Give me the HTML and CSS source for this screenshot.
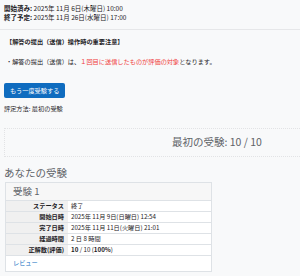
FILE: index.html
```html
<!DOCTYPE html>
<html lang="ja">
<head>
    <meta charset="UTF-8">
    <meta name="viewport" content="width=device-width, initial-scale=1.0">
    <title>小テスト</title>
    <link rel="stylesheet" href="styles.css">
</head>
<body>
    <div class="page">
        <div class="dates">
            <div><strong>開始済み:</strong> 2025年 11月 6日(木曜日) 10:00</div>
            <div><strong>終了予定:</strong> 2025年 11月 26日(水曜日) 17:00</div>
        </div>

        <div class="notice">
            <p class="notice-title">【解答の提出（送信）操作時の重要注意】</p>
            <p>・解答の提出（送信）は、<span class="alert">１回目に送信したものが評価の対象</span>となります。</p>
        </div>

        <button class="btn-retry">もう一度受験する</button>
        <p class="grading">評定方法: 最初の受験</p>

        <div class="feedback">
            <h3>最初の受験: 10 / 10</h3>
        </div>

        <h2 class="attempts-title">あなたの受験</h2>

        <div class="attempt-card">
            <div class="attempt-header">受験 1</div>
            <table class="attempt-table">
                <tr><th>ステータス</th><td>終了</td></tr>
                <tr><th>開始日時</th><td>2025年 11月 9日(日曜日) 12:54</td></tr>
                <tr><th>完了日時</th><td>2025年 11月 11日(火曜日) 21:01</td></tr>
                <tr><th>経過時間</th><td>2 日 8 時間</td></tr>
                <tr><th>正解数(評価)</th><td><b>10</b> / 10 (<b>100%</b>)</td></tr>
            </table>
            <div class="attempt-footer">
                <a href="#">レビュー</a>
            </div>
        </div>
    </div>
</body>
</html>
```

FILE: styles.css
```css
:root {
    --bg-color: #f8f9fa;
    --text-color: #1d2125;
    --muted: #5f6368;
    --border-color: #dee2e6;
    --primary: #0f6cbf;
    --alert: #f03c3c;
}

html, body {
    overflow: hidden;
}

body {
    margin: 0;
    font-family: "Noto Sans CJK JP", "Noto Sans", sans-serif;
    font-size: 6.2px;
    line-height: 8.5px;
    color: var(--text-color);
    background-color: var(--bg-color);
}

.dates {
    padding: 4px 4px 8px;
    font-size: 6.5px;
    border-bottom: 1px solid #e6e7e9;
}

.notice {
    padding: 0 6px;
}

.notice p {
    margin: 0;
}

.notice-title {
    margin-top: 8px !important;
    font-weight: bold;
}

.notice p + p {
    margin-top: 11px;
}

.alert {
    color: var(--alert);
}

.btn-retry {
    display: block;
    margin: 17px 0 0 4px;
    height: 15px;
    padding: 0 6px;
    border: none;
    border-radius: 2px;
    background: var(--primary);
    color: white;
    font-family: inherit;
    font-size: 6.2px;
    cursor: pointer;
}

.grading {
    margin: 7px 4px 0;
}

/* box runs on past the right edge, so no right border */
.feedback {
    margin: 14px 0 0 4px;
    height: 29px;
    padding-left: 167px;
    border: 1px dotted #e2e3e5;
    border-right: none;
    box-sizing: border-box;
    display: flex;
    align-items: center;
}

.feedback h3 {
    margin: 0;
    font-size: 10.5px;
    font-weight: normal;
    color: var(--muted);
}

.attempts-title {
    margin: 9px 4px 0;
    font-size: 10.5px;
    line-height: 14px;
    font-weight: normal;
    color: var(--muted);
}

.attempt-card {
    margin: 2px 0 0 5px;
    width: 207px;
    background: white;
    border: 1px solid var(--border-color);
    box-sizing: border-box;
}

.attempt-header {
    padding: 0 7px;
    height: 17px;
    line-height: 17px;
    font-size: 9.5px;
    color: var(--muted);
    background: #f7f7f7;
    border-bottom: 1px solid var(--border-color);
}

.attempt-table {
    width: 100%;
    border-collapse: collapse;
}

.attempt-table th,
.attempt-table td {
    height: 10px;
    padding: 0 3px;
    line-height: 10px;
    border-bottom: 1px solid var(--border-color);
    text-align: left;
}

.attempt-table th {
    width: 55px;
    text-align: right;
    padding-right: 4px;
    background: #f0f0f0;
}

.attempt-footer {
    padding: 3px 7px 4px;
}

.attempt-footer a {
    color: var(--primary);
    text-decoration: none;
}
```
